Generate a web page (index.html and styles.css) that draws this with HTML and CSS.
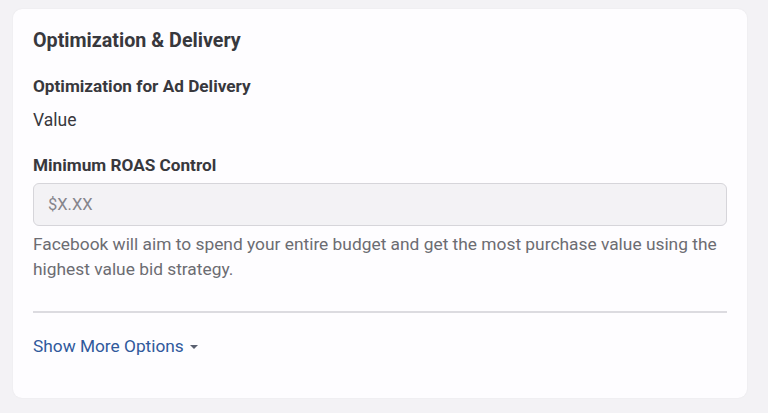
FILE: index.html
```html
<!DOCTYPE html>
<html>
<head>
<meta charset="utf-8">
<link rel="stylesheet" href="styles.css">
</head>
<body>
<div class="card">
  <h2 class="title">Optimization &amp; Delivery</h2>
  <div class="field">
    <div class="label">Optimization for Ad Delivery</div>
    <div class="value">Value</div>
  </div>
  <div class="field">
    <div class="label">Minimum ROAS Control</div>
    <div class="input">$X.XX</div>
    <p class="help">Facebook will aim to spend your entire budget and get the most purchase value using the highest value bid strategy.</p>
  </div>
  <hr class="divider">
  <a class="more">Show More Options <svg class="caret" width="10" height="6" viewBox="0 0 10 6"><path d="M1 1h8L5 5z" fill="#5a6070"/></svg></a>
</div>
</body>
</html>
```
FILE: styles.css
```css
html, body {
  margin: 0;
  padding: 0;
  background: #f3f2f5;
  width: 768px;
  height: 413px;
  overflow: hidden;
  font-family: Roboto, "Liberation Sans", sans-serif;
  color: #38383d;
}
.card {
  margin: 9px 0 0 13px;
  width: 734px;
  height: 389px;
  box-sizing: border-box;
  background: #fefdff;
  border-radius: 9px;
  box-shadow: 0 0 2px rgba(0,0,0,0.06);
  padding: 20px 20px 0 20px;
}
.title {
  margin: 0;
  font-size: 19.7px;
  font-weight: 700;
  line-height: 24px;
}
.field {
  margin-top: 21px;
}
.label {
  font-size: 17.2px;
  font-weight: 700;
  line-height: 24px;
}
.value {
  margin-top: 10px;
  font-size: 17.5px;
  line-height: 24px;
}
.input {
  margin-top: 6px;
  height: 43px;
  box-sizing: border-box;
  border: 1px solid #d6d5da;
  border-radius: 6px;
  background: #f3f2f5;
  padding: 0 14px;
  display: flex;
  align-items: center;
  font-size: 16.5px;
  color: #85858c;
}
.help {
  margin: 6px 0 0 0;
  font-size: 17.35px;
  line-height: 25px;
  color: #6c6c72;
}
.divider {
  margin: 29px 0 0 0;
  border: 0;
  height: 2px;
  background: #dcdbe0;
}
.more {
  display: inline-flex;
  align-items: center;
  gap: 5px;
  margin-top: 21px;
  font-size: 17.3px;
  line-height: 24px;
  color: #30599c;
}
.caret { margin-top: 2px; }
```
